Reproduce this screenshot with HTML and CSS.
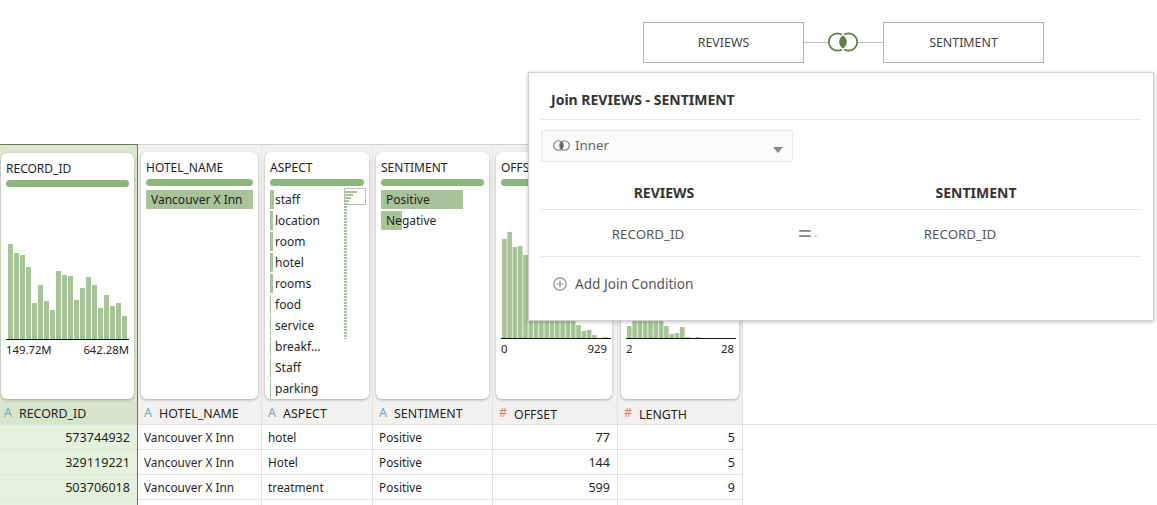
FILE: index.html
```html
<!DOCTYPE html>
<html lang="en">
<head>
    <meta charset="UTF-8">
    <title>Join REVIEWS - SENTIMENT</title>
    <link rel="stylesheet" href="styles.css">
</head>
<body>
    <div class="join-diagram">
        <div class="source-box">REVIEWS</div>
        <div class="connector"></div>
        <svg class="join-icon" width="30" height="20" viewBox="0 0 30 20">
            <circle cx="9.5" cy="10" r="8.7" fill="#fff" stroke="#5f7d4f" stroke-width="1.7"/>
            <circle cx="20.5" cy="10" r="8.7" fill="none" stroke="#5f7d4f" stroke-width="1.7"/>
            <path d="M15 2.5C21 7 21 13 15 17.5C9 13 9 7 15 2.5Z" fill="#5f7d4f" stroke="#fff" stroke-width="1.3"/>
        </svg>
        <div class="connector connector-right"></div>
        <div class="source-box">SENTIMENT</div>
    </div>

    <div class="data-grid">
        <!-- RECORD_ID -->
        <div class="col col-key">
            <div class="card">
                <div class="card-title">RECORD_ID</div>
                <div class="quality"></div>
                <svg class="hist" width="123" height="100" viewBox="0 0 123 100">
                    <g fill="#a7c498">
                        <rect x="2" y="5" width="5" height="95"/><rect x="8" y="14" width="5" height="86"/>
                        <rect x="14" y="16" width="5" height="84"/><rect x="20" y="28" width="5" height="72"/>
                        <rect x="26" y="64" width="5" height="36"/><rect x="32" y="46" width="5" height="54"/>
                        <rect x="38" y="62" width="5" height="38"/><rect x="44" y="71" width="5" height="29"/>
                        <rect x="50" y="32" width="5" height="68"/><rect x="56" y="36" width="5" height="64"/>
                        <rect x="62" y="37" width="5" height="63"/><rect x="68" y="61" width="5" height="39"/>
                        <rect x="74" y="49" width="5" height="51"/><rect x="80" y="38" width="5" height="62"/>
                        <rect x="86" y="46" width="5" height="54"/><rect x="92" y="69" width="5" height="31"/>
                        <rect x="98" y="56" width="5" height="44"/><rect x="104" y="67" width="5" height="33"/>
                        <rect x="110" y="64" width="5" height="36"/><rect x="116" y="77" width="5" height="23"/>
                    </g>
                </svg>
                <div class="axis"><span>149.72M</span><span>642.28M</span></div>
            </div>
            <div class="col-head"><span class="type type-text">A</span>RECORD_ID</div>
            <div class="cell num">573744932</div>
            <div class="cell num">329119221</div>
            <div class="cell num">503706018</div>
            <div class="cell"></div>
        </div>

        <!-- HOTEL_NAME -->
        <div class="col col-hotel">
            <div class="card">
                <div class="card-title">HOTEL_NAME</div>
                <div class="quality"></div>
                <div class="value-row selected full">Vancouver X Inn</div>
            </div>
            <div class="col-head"><span class="type type-text">A</span>HOTEL_NAME</div>
            <div class="cell">Vancouver X Inn</div>
            <div class="cell">Vancouver X Inn</div>
            <div class="cell">Vancouver X Inn</div>
            <div class="cell"></div>
        </div>

        <!-- ASPECT -->
        <div class="col col-aspect">
            <div class="card">
                <div class="card-title">ASPECT</div>
                <div class="quality"></div>
                <div class="aspect-list">
                    <div class="aspect-row w4">staff</div>
                    <div class="aspect-row w3">location</div>
                    <div class="aspect-row w3">room</div>
                    <div class="aspect-row w3">hotel</div>
                    <div class="aspect-row w3">rooms</div>
                    <div class="aspect-row">food</div>
                    <div class="aspect-row">service</div>
                    <div class="aspect-row">breakf...</div>
                    <div class="aspect-row">Staff</div>
                    <div class="aspect-row">parking</div>
                </div>
                <svg class="minimap" width="23" height="152" viewBox="0 0 23 152">
                    <rect x="0.5" y="0.5" width="21" height="16" fill="#fff" stroke="#bbb"/>
                    <g fill="#a7c498">
                        <rect x="1" y="3" width="12" height="2"/><rect x="1" y="6" width="8" height="2"/>
                        <rect x="1" y="9" width="6" height="2"/><rect x="1" y="12" width="4" height="2"/>
                        <rect x="1" y="15" width="3" height="1"/>
                    </g>
                    <line x1="1.5" y1="18" x2="1.5" y2="151" stroke="#a7c498" stroke-width="3" stroke-dasharray="2 1"/>
                </svg>
            </div>
            <div class="col-head"><span class="type type-text">A</span>ASPECT</div>
            <div class="cell">hotel</div>
            <div class="cell">Hotel</div>
            <div class="cell">treatment</div>
            <div class="cell"></div>
        </div>

        <!-- SENTIMENT -->
        <div class="col col-sentiment">
            <div class="card">
                <div class="card-title">SENTIMENT</div>
                <div class="quality"></div>
                <div class="value-row"><div class="value-fill" style="width: 82px"></div><span>Positive</span></div>
                <div class="value-row"><div class="value-fill" style="width: 21px"></div><span>Negative</span></div>
            </div>
            <div class="col-head"><span class="type type-text">A</span>SENTIMENT</div>
            <div class="cell">Positive</div>
            <div class="cell">Positive</div>
            <div class="cell">Positive</div>
            <div class="cell"></div>
        </div>

        <!-- OFFSET -->
        <div class="col col-offset">
            <div class="card">
                <div class="card-title">OFFSET</div>
                <div class="quality"></div>
                <svg class="hist hist-small" width="110" height="110" viewBox="0 0 110 110">
                    <g fill="#a7c498">
                        <rect x="1" y="11" width="4.6" height="99"/><rect x="6.3" y="4" width="4.6" height="106"/>
                        <rect x="11.6" y="19" width="4.6" height="91"/><rect x="16.9" y="18" width="4.6" height="92"/>
                        <rect x="22.2" y="27" width="4.6" height="83"/><rect x="27.5" y="40" width="4.6" height="70"/>
                        <rect x="32.8" y="50" width="4.6" height="60"/><rect x="38.1" y="65" width="4.6" height="45"/>
                        <rect x="43.4" y="75" width="4.6" height="35"/><rect x="48.7" y="82" width="4.6" height="28"/>
                        <rect x="54" y="88" width="4.6" height="22"/><rect x="59.3" y="90" width="4.6" height="20"/>
                        <rect x="64.6" y="91" width="4.6" height="19"/><rect x="69.9" y="93" width="4.6" height="17"/>
                        <rect x="75.2" y="97" width="4.6" height="13"/><rect x="80.5" y="103" width="4.6" height="7"/>
                        <rect x="85.8" y="102" width="4.6" height="8"/><rect x="91.1" y="107" width="4.6" height="3"/>
                        <rect x="101.7" y="109" width="4.6" height="1"/>
                    </g>
                </svg>
                <div class="axis"><span>0</span><span>929</span></div>
            </div>
            <div class="col-head col-head-num"><span class="type type-num">#</span>OFFSET</div>
            <div class="cell num">77</div>
            <div class="cell num">144</div>
            <div class="cell num">599</div>
            <div class="cell"></div>
        </div>

        <!-- LENGTH -->
        <div class="col col-length">
            <div class="card">
                <div class="card-title">LENGTH</div>
                <div class="quality"></div>
                <svg class="hist hist-small" width="110" height="110" viewBox="0 0 110 110">
                    <g fill="#a7c498">
                        <rect x="1" y="98" width="4.6" height="12"/><rect x="6.3" y="85" width="4.6" height="25"/>
                        <rect x="11.6" y="80" width="4.6" height="30"/><rect x="16.9" y="78" width="4.6" height="32"/>
                        <rect x="22.2" y="80" width="4.6" height="30"/><rect x="27.5" y="84" width="4.6" height="26"/>
                        <rect x="32.8" y="86" width="4.6" height="24"/><rect x="38.1" y="98" width="4.6" height="12"/>
                        <rect x="43.4" y="106" width="4.6" height="4"/><rect x="48.7" y="105" width="4.6" height="5"/>
                        <rect x="54" y="99" width="4.6" height="11"/><rect x="59.3" y="109" width="4.6" height="1"/>
                        <rect x="69.9" y="109" width="4.6" height="1"/>
                    </g>
                </svg>
                <div class="axis"><span>2</span><span>28</span></div>
            </div>
            <div class="col-head col-head-num"><span class="type type-num">#</span>LENGTH</div>
            <div class="cell num">5</div>
            <div class="cell num">5</div>
            <div class="cell num">9</div>
            <div class="cell"></div>
        </div>

        <div class="col-rest"></div>
    </div>

    <!-- join editor popup -->
    <div class="join-popup">
        <div class="popup-title">Join REVIEWS - SENTIMENT</div>
        <div class="join-select">
            <svg class="select-icon" width="17" height="11" viewBox="0 0 17 11">
                <circle cx="5.5" cy="5.5" r="4.8" fill="none" stroke="#777" stroke-width="1.1"/>
                <circle cx="11.5" cy="5.5" r="4.8" fill="none" stroke="#777" stroke-width="1.1"/>
                <path d="M8.5 1.8C10.3 3.8 10.3 7.2 8.5 9.2C6.7 7.2 6.7 3.8 8.5 1.8Z" fill="#555"/>
            </svg>
            <span>Inner</span>
            <div class="caret"></div>
        </div>
        <div class="join-head">
            <div>REVIEWS</div>
            <div>SENTIMENT</div>
        </div>
        <div class="join-cond">
            <div>RECORD_ID</div>
            <div class="op">=<span class="op-dot">.</span></div>
            <div>RECORD_ID</div>
        </div>
        <div class="add-cond">
            <svg width="14" height="14" viewBox="0 0 14 14">
                <circle cx="7" cy="7" r="6.2" fill="none" stroke="#8a8a8a" stroke-width="1.2"/>
                <path d="M7 3.5V10.5M3.5 7H10.5" stroke="#8a8a8a" stroke-width="1.2"/>
            </svg>
            <span>Add Join Condition</span>
        </div>
    </div>
</body>
</html>
```

FILE: styles.css
```css
html, body {
    margin: 0;
    padding: 0;
    height: 100%;
    overflow: hidden;
}
body {
    font-family: "Noto Sans", sans-serif;
    font-size: 12px;
    color: #1f1f1f;
    background: #fff;
}

/* join diagram at the top */
.join-diagram {
    height: 144px;
    box-sizing: border-box;
    padding: 22px 0 0 643px;
    display: flex;
    align-items: flex-start;
}
.source-box {
    width: 161px;
    height: 41px;
    box-sizing: border-box;
    border: 1px solid #b5b2ae;
    display: flex;
    align-items: center;
    justify-content: center;
    font-size: 12.4px;
    color: #444;
}
.connector {
    width: 24px;
    height: 1px;
    margin-top: 20px;
    background: #bdbdbd;
}
.connector-right {
    width: 25px;
}
.join-icon {
    margin: 10px 0 0 0;
    flex: none;
}

/* grid of columns */
.data-grid {
    display: flex;
    align-items: flex-start;
}
.col {
    flex: none;
    box-sizing: border-box;
    border-top: 1px solid #cfcfcf;
    border-right: 1px solid #e2e2e2;
    background: #f2f1ef;
    padding-top: 7px;
}
.col-key {
    width: 138px;
    background: #dbe8d0;
    border-top-color: #5f7d4f;
    border-right-color: #5f7d4f;
    padding-top: 8px;
}
.col-hotel { width: 124px; }
.col-aspect { width: 111px; }
.col-sentiment { width: 120px; }
.col-offset { width: 125px; }
.col-length { width: 125px; }
.col-rest {
    flex: 1;
    height: 280px;
    border-bottom: 1px solid #e2e2e2;
}

.card {
    position: relative;
    height: 247px;
    margin: 0 3px 2px 3px;
    padding: 8px 5px 0 5px;
    box-sizing: border-box;
    background: #fff;
    border-radius: 6px;
    box-shadow: 0 1px 3px rgba(0, 0, 0, 0.3);
    overflow: hidden;
}
.col-key .card {
    height: 246px;
    margin: 0 3px 2px 1px;
}
.col-offset .card { margin: 0 5px 2px 3px; }
.col-length .card { margin: 0 3px 2px 3px; }
.card-title {
    height: 19px;
    line-height: 16px;
    white-space: nowrap;
}
.quality {
    height: 7px;
    border-radius: 4px;
    background: #8cb77b;
    margin-bottom: 4px;
}
.hist {
    display: block;
    margin-top: 52px;
    border-bottom: 1px solid #111;
}
.hist-small {
    margin-top: 42px;
}
.axis {
    display: flex;
    justify-content: space-between;
    margin-top: 1px;
    font-size: 11.3px;
    line-height: 18px;
    color: #222;
}

.value-row {
    position: relative;
    height: 19px;
    line-height: 19px;
    margin-bottom: 2px;
    padding-left: 5px;
}
.value-row span {
    position: relative;
}
.value-row.selected {
    background: #a7c498;
}
.value-fill {
    position: absolute;
    left: 0;
    top: 0;
    bottom: 0;
    background: #a7c498;
}

.aspect-row {
    height: 19px;
    line-height: 19px;
    margin-bottom: 2px;
    padding-left: 4px;
    border-left: 1px solid #a7c498;
}
.aspect-row.w4 { border-left-width: 4px; padding-left: 1px; }
.aspect-row.w3 { border-left-width: 3px; padding-left: 2px; }
.minimap {
    position: absolute;
    left: 79px;
    top: 36px;
}

.col-head {
    height: 23px;
    line-height: 23px;
    padding-left: 4px;
    border-bottom: 1px solid #e2e2e2;
    font-size: 12.4px;
    white-space: nowrap;
}
.col-key .col-head {
    background: #d5e5ca;
}
.col-head-num {
    line-height: 24px;
}
.type {
    display: inline-block;
    width: 15px;
    font-size: 12.5px;
    vertical-align: 1px;
}
.col-hotel .col-head,
.col-aspect .col-head,
.col-sentiment .col-head,
.col-offset .col-head,
.col-length .col-head {
    padding-left: 6px;
}
.type-text { color: #7ba3c4; }
.type-num { color: #e0826c; vertical-align: 2px; }

.cell {
    height: 24px;
    line-height: 25px;
    padding: 0 7px 0 6px;
    background: #fff;
    border-bottom: 1px solid #e2e2e2;
    font-size: 11.8px;
    white-space: nowrap;
}
.col-key .cell {
    background: #e4f2dc;
}
.num {
    text-align: right;
    font-size: 12.6px;
}

/* popup */
.join-popup {
    position: absolute;
    left: 528px;
    top: 72px;
    width: 626px;
    height: 249px;
    box-sizing: border-box;
    padding: 0 12px;
    background: #fff;
    border: 1px solid #d0d0d0;
    box-shadow: 0 1px 4px rgba(0, 0, 0, 0.25);
    color: #555;
    font-size: 13.3px;
}
.popup-title {
    height: 46px;
    line-height: 54px;
    padding-left: 10px;
    font-size: 14px;
    font-weight: 700;
    color: #333;
    border-bottom: 1px solid #e6e6e6;
}
.join-select {
    position: relative;
    width: 252px;
    height: 32px;
    margin-top: 10px;
    box-sizing: border-box;
    border: 1px solid #e8e8e8;
    border-radius: 2px;
    background: #fafafa;
    display: flex;
    align-items: center;
    gap: 5px;
    padding: 0 0 2px 11px;
    color: #666;
}
.caret {
    position: absolute;
    right: 9px;
    top: 16px;
    border-left: 5px solid transparent;
    border-right: 5px solid transparent;
    border-top: 6px solid #888;
}
.join-head {
    display: grid;
    grid-template-columns: 246px 24px 330px;
    height: 48px;
    box-sizing: border-box;
    padding-top: 21px;
    border-bottom: 1px solid #e6e6e6;
    font-size: 14px;
    font-weight: 700;
    color: #333;
    text-align: center;
}
.join-head div:last-child {
    grid-column: 3;
}
.join-cond {
    display: grid;
    grid-template-columns: 214px 105px 200px;
    height: 46px;
    line-height: 49px;
    border-bottom: 1px solid #e6e6e6;
    text-align: center;
}
.op {
    font-size: 25px;
    color: #888;
    line-height: 46px;
}
.op-dot {
    font-size: 11px;
    margin-left: 2px;
    position: relative;
    top: -6px;
}
.add-cond {
    display: flex;
    align-items: center;
    gap: 8px;
    padding: 17px 0 0 12px;
    font-size: 13.6px;
    color: #555;
}
```
